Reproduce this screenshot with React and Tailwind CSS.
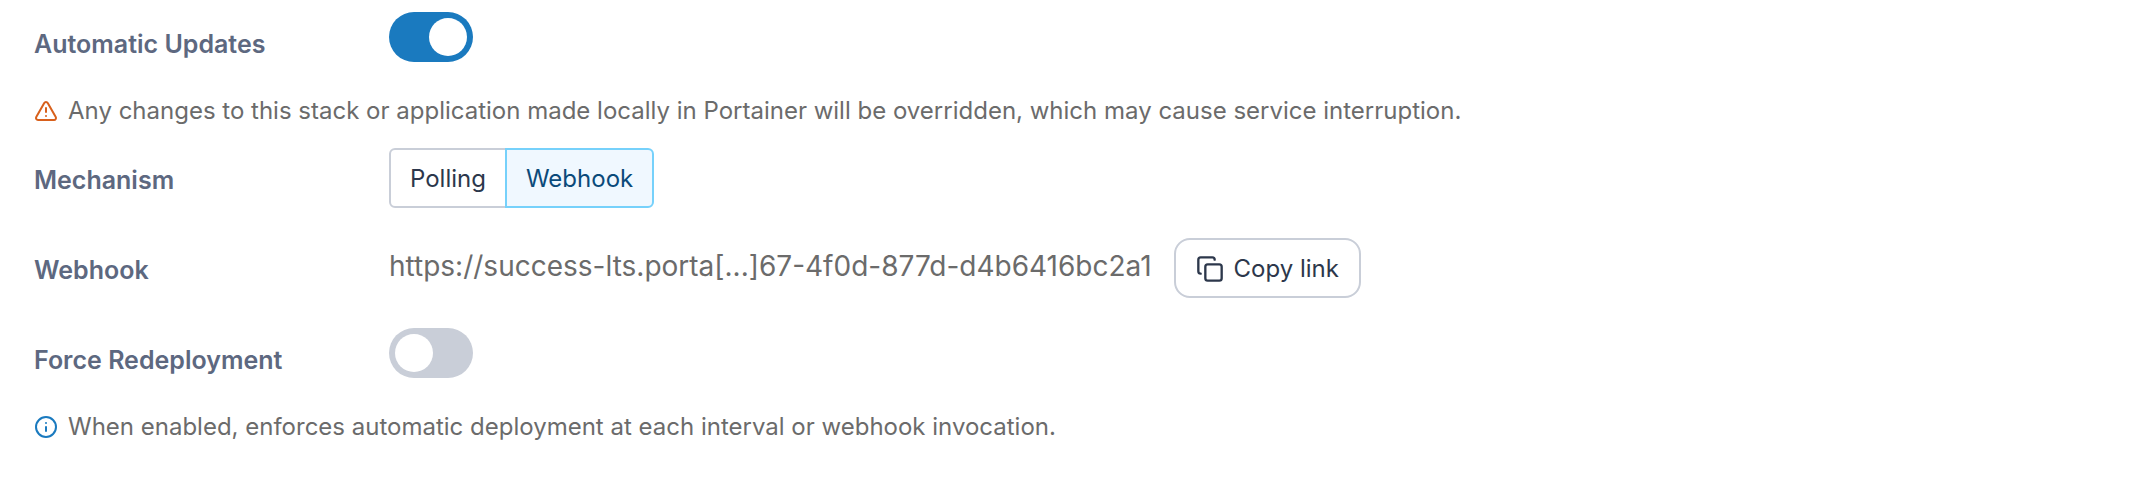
import { useState } from "react";
import { Copy, Info, TriangleAlert } from "lucide-react";

function Row({ label, htmlFor, children }) {
  return (
    <div className="flex min-h-15 items-start">
      <label
        htmlFor={htmlFor}
        className="w-[355px] shrink-0 pt-4 text-[25px] leading-8 font-semibold text-[#5d6880]"
      >
        {label}
      </label>
      {children}
    </div>
  );
}

function Toggle({ id, checked, onChange }) {
  return (
    <input
      id={id}
      type="checkbox"
      role="switch"
      checked={checked}
      onChange={(e) => onChange(e.target.checked)}
      className="h-[50px] w-[84px] shrink-0 cursor-pointer appearance-none rounded-full bg-[#c9ced8] p-1.5 transition-colors before:block before:size-[38px] before:rounded-full before:bg-white before:content-[''] checked:bg-[#1a7abf] checked:before:ml-auto"
    />
  );
}

function Note({ icon, children }) {
  return (
    <p className="flex items-center gap-2.5 text-2xl leading-[30px] text-[#6b6b6b]">
      {icon}
      <span>{children}</span>
    </p>
  );
}

function Option({ selected, onClick, className, children }) {
  return (
    <button
      type="button"
      aria-pressed={selected}
      onClick={onClick}
      className={`h-15 border-2 px-[19px] pt-0.5 text-2xl ${className} ${
        selected
          ? "z-10 border-[#76d1fb] bg-[#f0f8ff] text-[#0b4a7a]"
          : "border-[#c9ced8] bg-white text-[#2c374b]"
      }`}
    >
      {children}
    </button>
  );
}

export default function App() {
  const [auto, setAuto] = useState(true);
  const [force, setForce] = useState(false);
  const [mechanism, setMechanism] = useState("webhook");

  return (
    <main className="bg-white px-[34px] pt-3 pb-12 font-['Inter',sans-serif]">
      <Row label="Automatic Updates" htmlFor="auto-updates">
        <Toggle id="auto-updates" checked={auto} onChange={setAuto} />
      </Row>
      <div className="pt-6 pb-[22px]">
        <Note icon={<TriangleAlert className="size-6 shrink-0 text-[#d8601c]" />}>
          Any changes to this stack or application made locally in Portainer will be overridden,
          which may cause service interruption.
        </Note>
      </div>
      <div className="flex flex-col gap-[30px]">
        <Row label="Mechanism" htmlFor="mechanism">
          <div id="mechanism" role="group" aria-label="Mechanism" className="flex -space-x-0.5">
            <Option
              selected={mechanism === "polling"}
              onClick={() => setMechanism("polling")}
              className="rounded-l-md"
            >
              Polling
            </Option>
            <Option
              selected={mechanism === "webhook"}
              onClick={() => setMechanism("webhook")}
              className="rounded-r-md"
            >
              Webhook
            </Option>
          </div>
        </Row>
        <Row label="Webhook" htmlFor="webhook-url">
          <div className="flex items-start gap-[22px]">
            <output id="webhook-url" className="pt-2 text-[28px] leading-10 text-[#6b6b6b]">
              https://success-lts.porta[...]67-4f0d-877d-d4b6416bc2a1
            </output>
            <button
              type="button"
              className="flex h-15 items-center gap-2.5 rounded-2xl border-2 border-[#c9ced8] bg-white px-5 pt-0.5 text-2xl text-[#2c374b]"
            >
              <Copy className="size-7" />
              Copy link
            </button>
          </div>
        </Row>
        <Row label="Force Redeployment" htmlFor="force-redeploy">
          <Toggle id="force-redeploy" checked={force} onChange={setForce} />
        </Row>
      </div>
      <div className="pt-6">
        <Note icon={<Info className="size-6 shrink-0 text-[#1a7abf]" />}>
          When enabled, enforces automatic deployment at each interval or webhook invocation.
        </Note>
      </div>
    </main>
  );
}
